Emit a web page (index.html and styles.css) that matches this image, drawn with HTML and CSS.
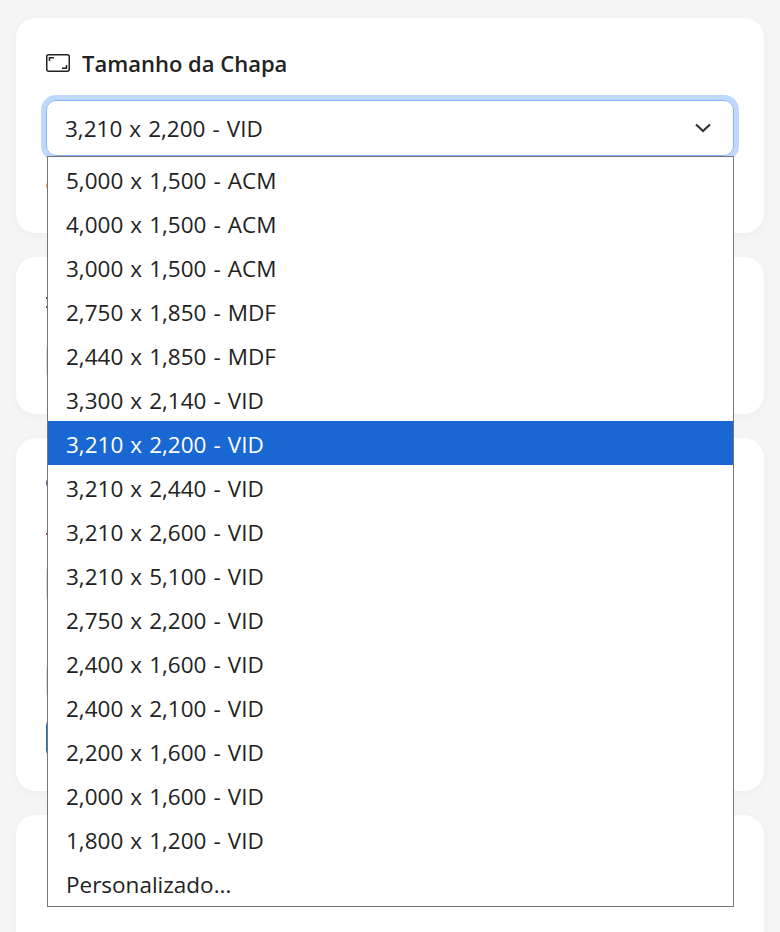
FILE: index.html
```html
<!DOCTYPE html>
<html lang="pt-BR">

<head>
    <meta charset="UTF-8">
    <meta name="viewport" content="width=device-width, initial-scale=1.0">
    <title>Tamanho da Chapa</title>
    <link rel="stylesheet" href="styles.css">
</head>

<body>
    <div class="page">
        <section class="card card-size">
            <h2 class="card-title">
                <svg class="title-icon" viewBox="0 0 24 18" width="24" height="18" fill="none" stroke="#222" stroke-width="1.5">
                    <rect x="0.75" y="0.75" width="22.5" height="16.5" rx="2"></rect>
                    <path d="M3.5 7V3.75H8"></path>
                    <path d="M20.5 11V14.25H16"></path>
                </svg>
                Tamanho da Chapa
            </h2>
            <div class="select-wrap">
                <div class="select-box">
                    <span>3,210 x 2,200 - VID</span>
                    <svg class="chevron" viewBox="0 0 16 10" width="16" height="10" fill="none" stroke="#333" stroke-width="2.2">
                        <path d="M1 1.5L8 8L15 1.5"></path>
                    </svg>
                </div>
                <ul class="select-list">
                    <li>5,000 x 1,500 - ACM</li>
                    <li>4,000 x 1,500 - ACM</li>
                    <li>3,000 x 1,500 - ACM</li>
                    <li>2,750 x 1,850 - MDF</li>
                    <li>2,440 x 1,850 - MDF</li>
                    <li>3,300 x 2,140 - VID</li>
                    <li class="selected">3,210 x 2,200 - VID</li>
                    <li>3,210 x 2,440 - VID</li>
                    <li>3,210 x 2,600 - VID</li>
                    <li>3,210 x 5,100 - VID</li>
                    <li>2,750 x 2,200 - VID</li>
                    <li>2,400 x 1,600 - VID</li>
                    <li>2,400 x 2,100 - VID</li>
                    <li>2,200 x 1,600 - VID</li>
                    <li>2,000 x 1,600 - VID</li>
                    <li>1,800 x 1,200 - VID</li>
                    <li>Personalizado...</li>
                </ul>
            </div>
            <div class="hint-dot"></div>
        </section>
        <section class="card card-b">
            <div class="lines-icon"></div>
            <div class="field field-b"></div>
        </section>
        <section class="card card-c">
            <div class="ring-icon"></div>
            <div class="red-mark"></div>
            <div class="field field-c1"></div>
            <div class="field field-c2"></div>
            <div class="blue-btn"></div>
        </section>
        <section class="card card-d"></section>
    </div>
</body>

</html>
```

FILE: styles.css
```css
* {
    box-sizing: border-box;
}

body {
    margin: 0;
    background: #f5f5f5;
    color: #222222;
    font-family: 'Open Sans', 'Noto Sans', sans-serif;
    height: 932px;
    overflow: hidden;
}

.page {
    display: flex;
    flex-direction: column;
    gap: 24px;
    padding: 18px 16px 0;
}

.card {
    background: #ffffff;
    border-radius: 20px;
    box-shadow: 0 2px 10px rgba(0, 0, 0, 0.03);
    padding: 0 30px;
}

.card-size {
    height: 215px;
    padding-top: 29px;
}

.card-b {
    height: 157px;
    padding-top: 40px;
}

.card-c {
    height: 353px;
    padding-top: 39px;
}

.card-d {
    height: 140px;
}

.card-title {
    display: flex;
    align-items: center;
    gap: 12px;
    margin: 0 0 21px;
    font-size: 22px;
    font-weight: 600;
    line-height: 32px;
}

.select-wrap {
    position: relative;
    z-index: 2;
}

.select-box {
    display: flex;
    align-items: center;
    justify-content: space-between;
    height: 56px;
    padding: 0 22px 0 18px;
    border: 1px solid #8ab4f8;
    border-radius: 10px;
    box-shadow: 0 0 0 5px #bfd9fd;
    font-size: 22.5px;
    word-spacing: 1.2px;
}

.select-list {
    position: absolute;
    top: 56px;
    left: 1px;
    right: 0;
    margin: 0;
    padding: 0 0 1px;
    list-style: none;
    background: #ffffff;
    border: 1px solid #767676;
    font-size: 22.5px;
    word-spacing: 1.2px;
}

.select-list li {
    height: 44px;
    line-height: 44px;
    padding: 2px 0 0 18px;
}

.select-list .selected {
    background: #1967d2;
    color: #ffffff;
}

.hint-dot {
    width: 12px;
    height: 12px;
    margin-top: 24px;
    border-radius: 50%;
    background: #f0a24a;
}

.lines-icon {
    width: 10px;
    height: 11px;
    border-top: 2px dotted #555555;
    border-bottom: 2px dotted #555555;
}

.field {
    border: 1px solid #dddddd;
    border-radius: 8px;
}

.field-b {
    height: 38px;
    margin-top: 34px;
}

.ring-icon {
    width: 12px;
    height: 12px;
    border: 2px solid #3a4a7a;
    border-radius: 50%;
}

.red-mark {
    width: 8px;
    height: 2px;
    margin-top: 44px;
    background: #b0453a;
}

.field-c1 {
    height: 40px;
    margin-top: 28px;
}

.field-c2 {
    height: 38px;
    margin-top: 59px;
}

.blue-btn {
    height: 40px;
    margin-top: 18px;
    border-radius: 8px;
    background: #1967d2;
}
```
